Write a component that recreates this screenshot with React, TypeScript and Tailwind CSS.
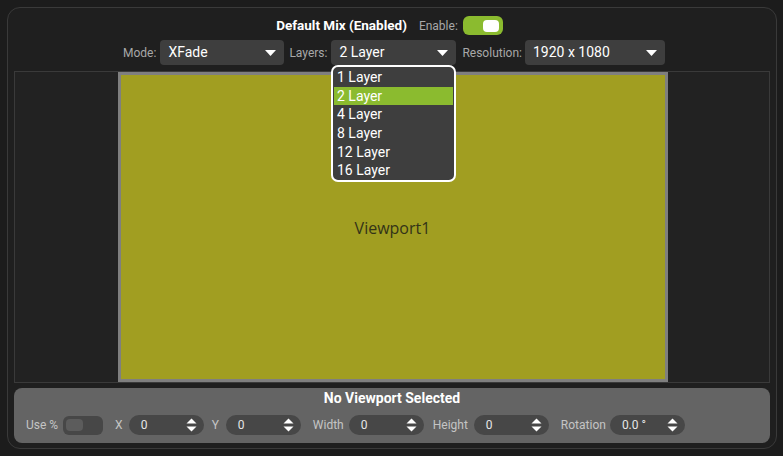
import React from "react";

const Caret = () => (
  <svg width="11" height="6" viewBox="0 0 11 6" className="shrink-0">
    <path d="M0 0 L11 0 L5.5 6 Z" fill="#ffffff" />
  </svg>
);

const Spinner = () => (
  <svg width="11" height="14" viewBox="0 0 11 14" className="shrink-0">
    <path d="M0.5 5.5 L5.5 0.5 L10.5 5.5 Z" fill="#ffffff" />
    <path d="M0.5 8.5 L10.5 8.5 L5.5 13.5 Z" fill="#ffffff" />
  </svg>
);

function Select({ value, width }: { value: string; width: string }) {
  return (
    <div
      className={`${width} h-[25px] bg-[#3e3e3e] rounded-[4px] flex items-center justify-between pl-[8px] pr-[8px] text-[14px] text-white`}
    >
      <span>{value}</span>
      <Caret />
    </div>
  );
}

function NumInput({ value }: { value: string }) {
  return (
    <div className="w-[75px] h-[20px] bg-[#474747] rounded-full flex items-center justify-between pl-[12px] pr-[7px] text-[12px] text-[#e6e6e6]">
      <span>{value}</span>
      <Spinner />
    </div>
  );
}

export default function App() {
  const layers = ["1 Layer", "2 Layer", "4 Layer", "8 Layer", "12 Layer", "16 Layer"];
  return (
    <div
      className="w-[783px] h-[456px] bg-[#1c1c1c] pt-[7px] pl-[7px]"
      style={{ fontFamily: "Roboto, 'Liberation Sans', sans-serif" }}
    >
      <div className="relative w-[770px] h-[442px] border border-[#3a3a3a] rounded-[13px] bg-[#1f1f1f] flex flex-col px-[6px] pt-[8px] pb-[5px]">
        {/* header */}
        <div className="flex items-center justify-center h-[19px] pr-[5px]">
          <span className="text-[13.5px] font-bold text-white">Default Mix (Enabled)</span>
          <span className="ml-[12px] text-[12px] text-[#a8a8a8]">Enable:</span>
          <div className="ml-[5px] w-[40px] h-[19px] rounded-[6px] bg-[#8bbb2f] flex items-center justify-end pr-[4px]">
            <div className="w-[16px] h-[12px] rounded-[4px] bg-white" />
          </div>
        </div>
        {/* controls row */}
        <div className="flex items-center justify-center mt-[5px] h-[25px] pl-[4px]">
          <span className="text-[12px] text-[#a8a8a8]">Mode:</span>
          <div className="ml-[4px]">
            <Select value="XFade" width="w-[124px]" />
          </div>
          <span className="ml-[5px] text-[12px] text-[#a8a8a8]">Layers:</span>
          <div className="ml-[4px]">
            <Select value="2 Layer" width="w-[125px]" />
          </div>
          <span className="ml-[6px] text-[12px] text-[#a8a8a8]">Resolution:</span>
          <div className="ml-[3px]">
            <Select value="1920 x 1080" width="w-[140px]" />
          </div>
        </div>
        {/* viewport area */}
        <div className="mt-[6px] h-[312px] border border-[#3a3a3a] bg-[#222222] flex justify-center pl-[1px]">
          <div className="w-[550px] h-[310px] border-[3px] border-[#7f7f7f] bg-[#a19e21] flex items-center justify-center">
            <span
              className="text-[16px] text-[#333318] mt-[2px]"
              style={{ fontFamily: "'Open Sans', 'Noto Sans', sans-serif" }}
            >
              Viewport1
            </span>
          </div>
        </div>
        {/* bottom panel */}
        <div className="mt-[5px] h-[55px] bg-[#646464] rounded-[8px] flex flex-col">
          <div className="text-center text-[14px] font-bold text-white mt-[1px] leading-[18px]">
            No Viewport Selected
          </div>
          <div className="flex items-center mt-[8px] pl-[12px] text-[12px] text-[#c4c4c4]">
            <span>Use %</span>
            <div className="ml-[5px] w-[40px] h-[19px] rounded-[6px] bg-[#474747] flex items-center pl-[3px]">
              <div className="w-[17px] h-[12px] rounded-[4px] bg-[#5c5c5c]" />
            </div>
            <span className="ml-[12px]">X</span>
            <div className="ml-[6px]"><NumInput value="0" /></div>
            <span className="ml-[8px]">Y</span>
            <div className="ml-[7px]"><NumInput value="0" /></div>
            <span className="ml-[12px]">Width</span>
            <div className="ml-[5px]"><NumInput value="0" /></div>
            <span className="ml-[9px]">Height</span>
            <div className="ml-[6px]"><NumInput value="0" /></div>
            <span className="ml-[12px]">Rotation</span>
            <div className="ml-[4px]"><NumInput value="0.0 °" /></div>
          </div>
        </div>
        {/* dropdown menu */}
        <div className="absolute left-[323px] top-[57px] w-[125px] h-[117px] bg-[#3e3e3e] border-2 border-white rounded-[7px] py-[1px] px-[1px] flex flex-col">
          {layers.map((l) => (
            <div
              key={l}
              className={`h-[18.7px] leading-[18.7px] pl-[3px] text-[14px] text-white ${l === "2 Layer" ? "bg-[#8bbb2f]" : ""}`}
            >
              {l}
            </div>
          ))}
        </div>
      </div>
    </div>
  );
}
